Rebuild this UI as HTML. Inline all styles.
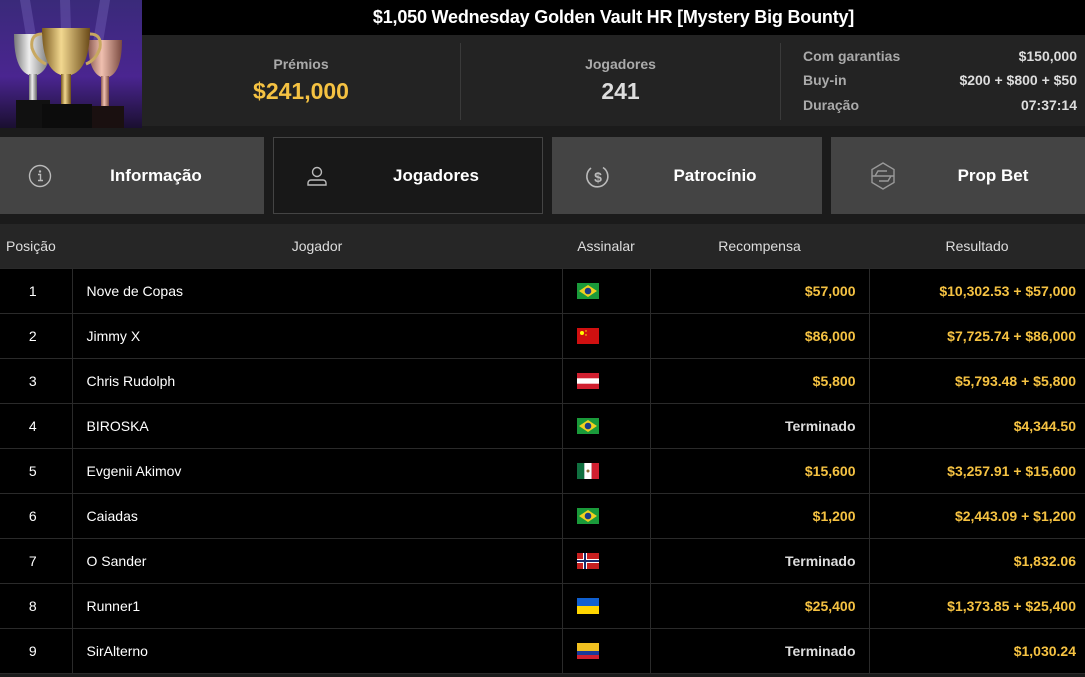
<!DOCTYPE html>
<html><head><meta charset="utf-8">
<style>
*{margin:0;padding:0;box-sizing:border-box}
body{width:1085px;height:677px;overflow:hidden;background:#1b1b1b;font-family:"Liberation Sans",Arial,sans-serif;color:#fff;position:relative}
.abs{position:absolute}
.title{left:0;top:0;width:1085px;height:35px;background:#000;text-align:center;font-weight:bold;font-size:18px;line-height:35px;padding-left:142px;letter-spacing:-0.2px}
.stats{left:0;top:35px;width:1085px;height:91px;background:#232323}
.lbl{color:#aaa;font-weight:bold;font-size:14px}
.gold{color:#f5c242}
.vsep{width:1px;background:#3a3a3a;top:43px;height:77px}
.tab{top:137px;height:77px;background:#444;font-weight:bold;font-size:17px;line-height:77px}
.tab svg{position:absolute;left:28px;top:27px}
.tab span{position:absolute;left:0;right:0;top:0;text-align:center;padding-left:40px}
table{position:absolute;left:0;top:224px;width:1085px;border-collapse:collapse;font-size:14px}
th{background:#262626;height:44px;font-weight:normal;color:#ddd;font-size:14px}
td{background:#000;height:45px;border:1px solid #2a2a2a;font-weight:normal}
td.b{font-weight:bold;text-align:right;padding-right:13px}
.fl{display:inline-block;width:22px;height:16px;vertical-align:middle;margin-left:14px}
</style></head><body>
<div class="abs title">$1,050 Wednesday Golden Vault HR [Mystery Big Bounty]</div>
<div class="abs stats"></div>
<svg class="abs" style="left:0;top:0" width="142" height="128" viewBox="0 0 142 128">
<defs><linearGradient id="bg" x1="0" y1="0" x2="0" y2="1"><stop offset="0" stop-color="#3a2a7a"/><stop offset="0.6" stop-color="#4a2590"/><stop offset="1" stop-color="#1a0f30"/></linearGradient>
<linearGradient id="sv" x1="0" x2="1"><stop offset="0" stop-color="#777"/><stop offset="0.4" stop-color="#eee"/><stop offset="1" stop-color="#666"/></linearGradient>
<linearGradient id="gd" x1="0" x2="1"><stop offset="0" stop-color="#7a5a20"/><stop offset="0.4" stop-color="#f2d890"/><stop offset="1" stop-color="#6a4a18"/></linearGradient>
<linearGradient id="br" x1="0" x2="1"><stop offset="0" stop-color="#8a5a50"/><stop offset="0.4" stop-color="#f0c0b0"/><stop offset="1" stop-color="#7a4a40"/></linearGradient></defs>
<rect width="142" height="128" fill="url(#bg)"/>
<g fill="#8a7ad0" opacity="0.3"><polygon points="20,0 30,0 40,60 30,60"/><polygon points="60,0 70,0 72,60 62,60"/><polygon points="100,0 110,0 100,60 90,60"/></g>
<path d="M14,34 h38 q0,40 -19,42 q-19,-2 -19,-42z" fill="url(#sv)"/><rect x="29" y="74" width="8" height="30" fill="url(#sv)"/><rect x="16" y="100" width="34" height="28" fill="#111"/>
<path d="M88,40 h34 q0,36 -17,38 q-17,-2 -17,-38z" fill="url(#br)"/><rect x="101" y="76" width="8" height="32" fill="url(#br)"/><rect x="90" y="106" width="34" height="22" fill="#1a1010"/>
<path d="M42,28 h48 q0,46 -24,48 q-24,-2 -24,-48z" fill="url(#gd)"/><rect x="61" y="74" width="10" height="34" fill="url(#gd)"/><rect x="42" y="104" width="50" height="24" fill="#0c0c0c"/>
<path d="M42,34 q-12,0 -10,14 q4,12 14,16" stroke="#c8a860" stroke-width="3" fill="none"/><path d="M90,34 q12,0 10,14 q-4,12 -14,16" stroke="#c8a860" stroke-width="3" fill="none"/>
</svg>
<div class="abs lbl" style="left:142px;width:318px;top:56px;text-align:center">Prémios</div>
<div class="abs gold" style="left:142px;width:318px;top:78px;text-align:center;font-weight:bold;font-size:23px">$241,000</div>
<div class="abs vsep" style="left:460px"></div>
<div class="abs lbl" style="left:461px;width:319px;top:56px;text-align:center">Jogadores</div>
<div class="abs" style="left:461px;width:319px;top:78px;text-align:center;font-weight:bold;font-size:23px;color:#ddd">241</div>
<div class="abs vsep" style="left:780px"></div>
<div class="abs lbl" style="left:803px;top:48px">Com garantias</div>
<div class="abs lbl" style="left:803px;top:72px">Buy-in</div>
<div class="abs lbl" style="left:803px;top:97px">Duração</div>
<div class="abs" style="right:8px;top:48px;font-weight:bold;font-size:14px;color:#ddd">$150,000</div>
<div class="abs" style="right:8px;top:72px;font-weight:bold;font-size:14px;color:#ddd">$200 + $800 + $50</div>
<div class="abs" style="right:8px;top:97px;font-weight:bold;font-size:14px;color:#ddd">07:37:14</div>

<div class="abs tab" style="left:0;width:264px"><svg width="24" height="24" viewBox="0 0 24 24"><circle cx="12" cy="12" r="10.5" fill="none" stroke="#bbb" stroke-width="1.4"/><circle cx="12" cy="7.5" r="1.2" fill="#bbb"/><path d="M10,10.5h2.5v6M10,16.5h5" stroke="#bbb" stroke-width="1.4" fill="none"/></svg><span style="padding-left:48px">Informação</span></div>
<div class="abs tab" style="left:273px;width:270px;background:#181818;border:1px solid #444;line-height:75px"><svg width="24" height="24" viewBox="0 0 24 24" style="left:31px;top:26px"><circle cx="12" cy="8" r="4.5" fill="none" stroke="#bbb" stroke-width="1.4"/><path d="M3,21v-2a3,3 0 0 1 3,-3h12a3,3 0 0 1 3,3v2z" fill="none" stroke="#bbb" stroke-width="1.4"/></svg><span style="padding-left:56px">Jogadores</span></div>
<div class="abs tab" style="left:552px;width:270px"><svg width="26" height="26" viewBox="0 0 26 26" style="left:33px"><path d="M6,4 A10.5,10.5 0 1 0 18,3.5" fill="none" stroke="#bbb" stroke-width="1.6"/><text x="13" y="18" text-anchor="middle" fill="#bbb" font-size="14" font-family="Liberation Sans">$</text></svg><span style="padding-left:56px">Patrocínio</span></div>
<div class="abs tab" style="left:831px;width:254px"><svg width="28" height="30" viewBox="0 0 28 30" style="left:38px;top:24px"><polygon points="14,2 25,8.5 25,21.5 14,28 3,21.5 3,8.5" fill="none" stroke="#999" stroke-width="1.4"/><path d="M3,15h22M18,10h-9l-3,5M10,20h9l3,-5" stroke="#999" stroke-width="1.4" fill="none"/></svg><span style="padding-left:70px">Prop Bet</span></div>

<table>
<tr><th style="width:72px;text-align:left;padding-left:6px">Posição</th><th style="width:490px">Jogador</th><th style="width:88px">Assinalar</th><th style="width:219px">Recompensa</th><th>Resultado</th></tr>
<tbody id="tb"></tbody>
</table>
<script>
var F={br:'<svg class="fl" viewBox="0 0 22 16"><rect width="22" height="16" fill="#1a9a3a"/><polygon points="11,2 20,8 11,14 2,8" fill="#f0d020"/><circle cx="11" cy="8" r="3.3" fill="#1a3a8a"/></svg>',
cn:'<svg class="fl" viewBox="0 0 22 16"><rect width="22" height="16" fill="#d01010"/><circle cx="5" cy="5" r="2" fill="#ff0"/><circle cx="9" cy="3" r=".7" fill="#ff0"/><circle cx="9" cy="7" r=".7" fill="#ff0"/></svg>',
at:'<svg class="fl" viewBox="0 0 22 16"><rect width="22" height="16" fill="#d02030"/><rect y="5.3" width="22" height="5.4" fill="#fff"/></svg>',
mx:'<svg class="fl" viewBox="0 0 22 16"><rect width="7.3" height="16" fill="#107040"/><rect x="7.3" width="7.4" height="16" fill="#fff"/><rect x="14.7" width="7.3" height="16" fill="#d02030"/><circle cx="11" cy="8" r="1.5" fill="#8a6a30"/></svg>',
no:'<svg class="fl" viewBox="0 0 22 16"><rect width="22" height="16" fill="#c82020"/><rect x="6" width="4" height="16" fill="#fff"/><rect y="6" width="22" height="4" fill="#fff"/><rect x="7" width="2" height="16" fill="#1a2a6a"/><rect y="7" width="22" height="2" fill="#1a2a6a"/></svg>',
ua:'<svg class="fl" viewBox="0 0 22 16"><rect width="22" height="8" fill="#1060d0"/><rect y="8" width="22" height="8" fill="#ffd500"/></svg>',
co:'<svg class="fl" viewBox="0 0 22 16"><rect width="22" height="8" fill="#f0c020"/><rect y="8" width="22" height="4" fill="#1a3a9a"/><rect y="12" width="22" height="4" fill="#d02030"/></svg>'};
var R=[["Nove de Copas","br","$57,000","$10,302.53 + $57,000"],["Jimmy X","cn","$86,000","$7,725.74 + $86,000"],["Chris Rudolph","at","$5,800","$5,793.48 + $5,800"],["BIROSKA","br","T","$4,344.50"],["Evgenii Akimov","mx","$15,600","$3,257.91 + $15,600"],["Caiadas","br","$1,200","$2,443.09 + $1,200"],["O Sander","no","T","$1,832.06"],["Runner1","ua","$25,400","$1,373.85 + $25,400"],["SirAlterno","co","T","$1,030.24"]];
var h="";R.forEach(function(r,i){h+='<tr><td style="text-align:center;border-left:none;padding-right:6px">'+(i+1)+'</td><td style="padding-left:14px">'+r[0]+'</td><td>'+F[r[1]]+'</td><td class="b" style="color:'+(r[2]=="T"?"#ddd":"#f5c242")+'">'+(r[2]=="T"?"Terminado":r[2])+'</td><td class="b gold" style="border-right:none;padding-right:9px">'+r[3]+'</td></tr>'});
document.getElementById("tb").innerHTML=h;
</script>
</body></html>
